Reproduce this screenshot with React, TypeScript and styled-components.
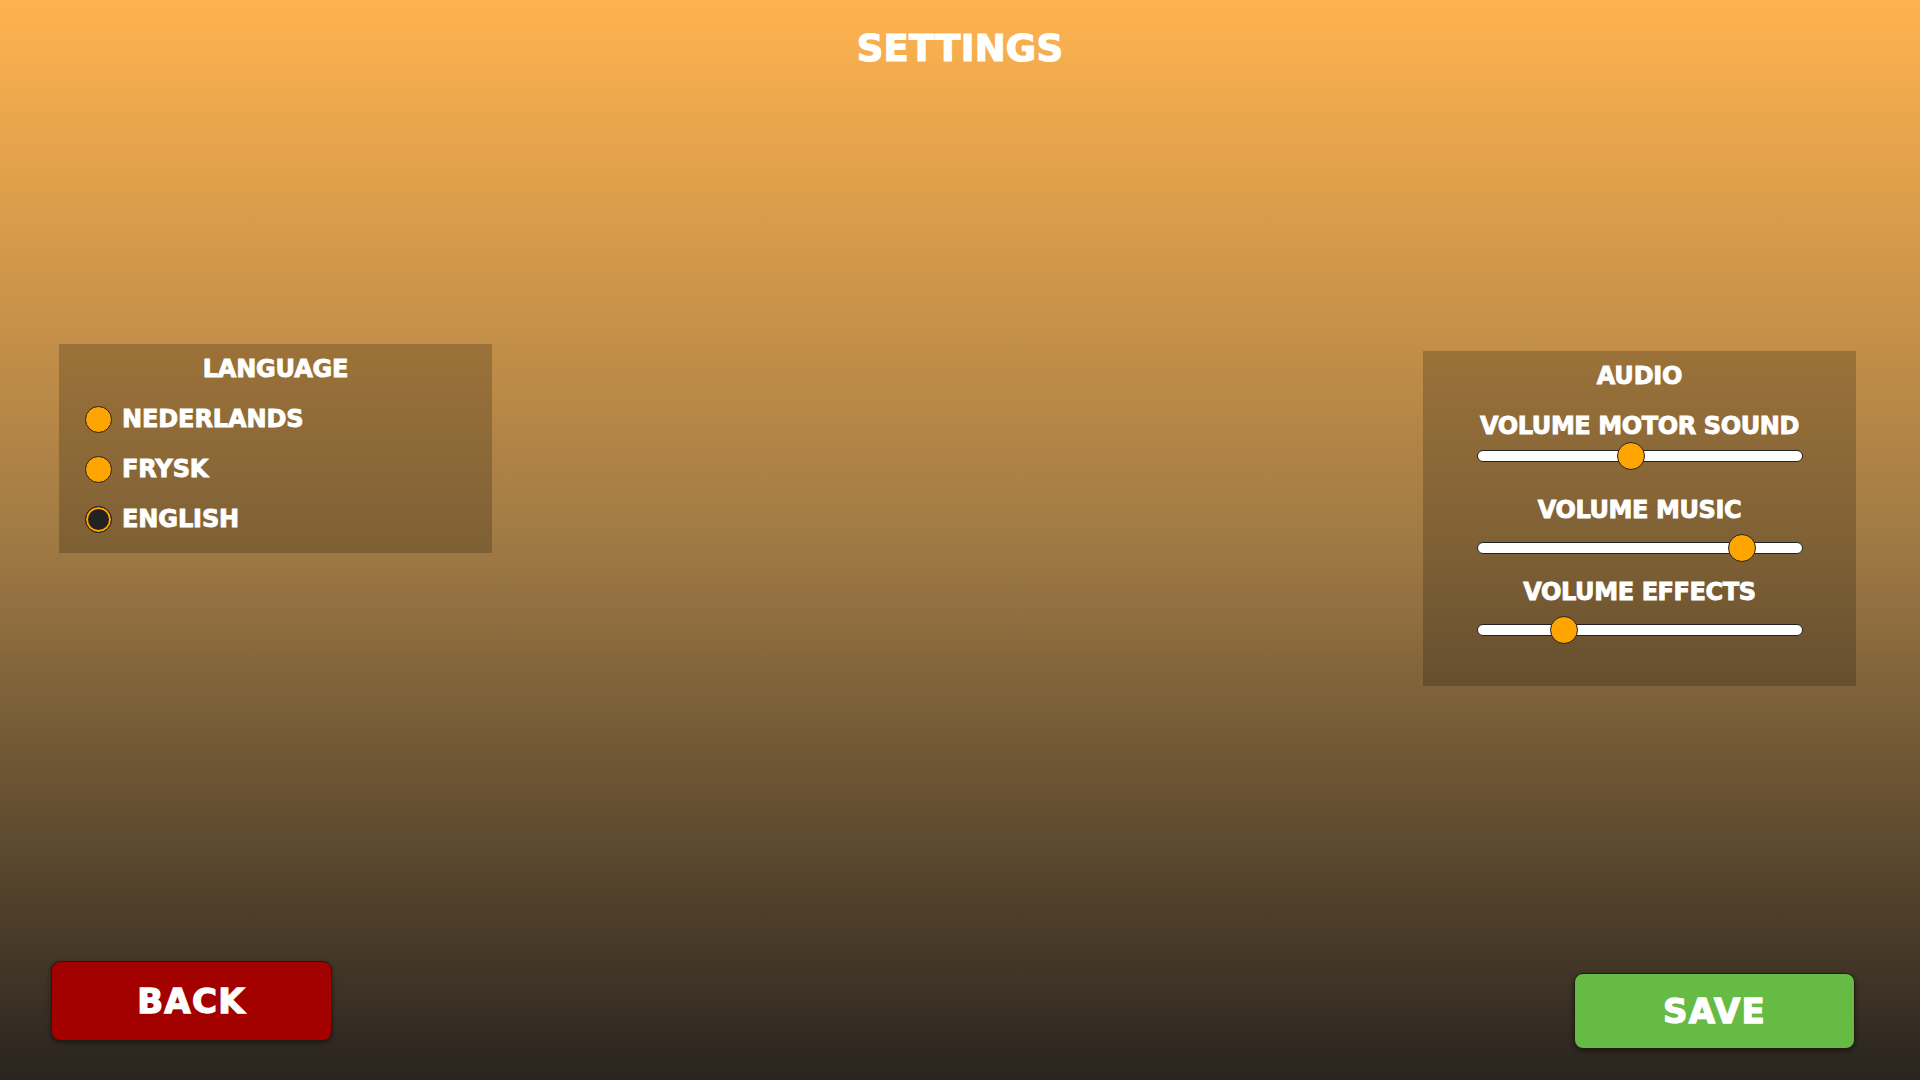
import React from "react";
import styled, { createGlobalStyle } from "styled-components";

const GlobalStyle = createGlobalStyle`
  html, body {
    margin: 0;
    padding: 0;
  }
  body {
    font-family: "DejaVu Sans", "Liberation Sans", sans-serif;
    font-weight: 700;
    color: #ffffff;
  }
  * { box-sizing: border-box; }
`;

const Page = styled.div`
  width: 1920px;
  height: 1080px;
  display: flex;
  flex-direction: column;
  background: linear-gradient(to bottom, #ffb34f 0%, #a07a44 50%, #29241f 100%);
  overflow: hidden;
  -webkit-text-stroke: 0.9px #ffffff;
`;

const Header = styled.header`
  height: 344px;
  padding-top: 27px;
  text-align: center;
`;

const Title = styled.h1`
  margin: 0;
  font-size: 37px;
  line-height: 44px;
  font-weight: 700;
  letter-spacing: 0.2px;
  -webkit-text-stroke: 1.2px #ffffff;
`;

const PanelRow = styled.div`
  display: flex;
  justify-content: space-between;
  align-items: flex-start;
  padding: 0 64px 0 59px;
`;

const Panel = styled.section<{ $offset?: number; $pad: string }>`
  width: 433px;
  margin-top: ${(p) => p.$offset ?? 0}px;
  padding: ${(p) => p.$pad};
  background: rgba(0, 0, 0, 0.2);
  display: flex;
  flex-direction: column;
`;

const PanelTitle = styled.h2`
  margin: 0;
  font-size: 24px;
  line-height: 28px;
  font-weight: 700;
  text-align: center;
  letter-spacing: -0.2px;
`;

const OptionList = styled.div`
  margin-top: 11px;
  display: flex;
  flex-direction: column;
`;

const OptionRow = styled.label`
  height: 50px;
  display: flex;
  align-items: center;
  gap: 10px;
  font-size: 24px;
  letter-spacing: -0.1px;
  cursor: pointer;
`;

const RadioDot = styled.span<{ $checked: boolean }>`
  width: 27px;
  height: 27px;
  border-radius: 50%;
  border: 1px solid #222222;
  background: ${(p) => (p.$checked ? "#222222" : "#ffa500")};
  box-shadow: ${(p) => (p.$checked ? "inset 0 0 0 2px #ffa500" : "none")};
  flex-shrink: 0;
`;

const SliderGroup = styled.div<{ $top: number; $gap: number }>`
  margin-top: ${(p) => p.$top}px;
  display: flex;
  flex-direction: column;
  align-items: center;
  gap: ${(p) => p.$gap}px;
`;

const SliderLabel = styled.div`
  font-size: 24px;
  line-height: 28px;
  text-align: center;
  letter-spacing: -0.4px;
`;

const SliderBox = styled.div`
  height: 28px;
  width: 326px;
  display: flex;
  align-items: center;
`;

const Track = styled.div`
  position: relative;
  width: 100%;
  height: 12px;
  border-radius: 6px;
  background: #ffffff;
  border: 1px solid #222222;
`;

const Thumb = styled.div`
  position: absolute;
  top: 50%;
  width: 28px;
  height: 28px;
  margin-top: -14px;
  border-radius: 50%;
  background: #ffa500;
  border: 1px solid #222222;
`;

const Footer = styled.footer`
  margin-top: auto;
  display: flex;
  justify-content: space-between;
  align-items: flex-end;
  padding: 0 65px 31px 51px;
`;

const Button = styled.button<{ $variant: "back" | "save" }>`
  width: 281px;
  height: ${(p) => (p.$variant === "back" ? 80 : 76)}px;
  margin-bottom: ${(p) => (p.$variant === "back" ? 8 : 0)}px;
  border-radius: 9px;
  border: 1px solid #231a14;
  background: ${(p) => (p.$variant === "back" ? "#a30000" : "#65bb43")};
  box-shadow: 0 2px 5px rgba(0, 0, 0, 0.45);
  color: #ffffff;
  font-family: "DejaVu Sans", "Liberation Sans", sans-serif;
  font-weight: 700;
  font-size: 34px;
  letter-spacing: 1.3px;
  -webkit-text-stroke: 1.3px #ffffff;
  cursor: pointer;
  padding: 0;
`;

const languages = [
  { name: "NEDERLANDS", checked: false },
  { name: "FRYSK", checked: false },
  { name: "ENGLISH", checked: true },
];

const sliders = [
  { label: "VOLUME MOTOR SOUND", value: 47, top: 22, gap: 2 },
  { label: "VOLUME MUSIC", value: 84.5, top: 26, gap: 10 },
  { label: "VOLUME EFFECTS", value: 24.5, top: 16, gap: 10 },
];

const TRACK_W = 326;
const THUMB = 28;

export default function App() {
  return (
    <>
      <GlobalStyle />
      <Page>
        <Header>
          <Title>SETTINGS</Title>
        </Header>
        <PanelRow>
          <Panel $pad="11px 26px 9px">
            <PanelTitle>LANGUAGE</PanelTitle>
            <OptionList>
              {languages.map((l) => (
                <OptionRow key={l.name}>
                  <RadioDot $checked={l.checked} />
                  {l.name}
                </OptionRow>
              ))}
            </OptionList>
          </Panel>
          <Panel $offset={7} $pad="11px 0 42px">
            <PanelTitle>AUDIO</PanelTitle>
            {sliders.map((s) => (
              <SliderGroup key={s.label} $top={s.top} $gap={s.gap}>
                <SliderLabel>{s.label}</SliderLabel>
                <SliderBox>
                  <Track>
                    <Thumb
                      style={{
                        left: `${(s.value / 100) * (TRACK_W - THUMB) - 1}px`,
                      }}
                    />
                  </Track>
                </SliderBox>
              </SliderGroup>
            ))}
          </Panel>
        </PanelRow>
        <Footer>
          <Button $variant="back">BACK</Button>
          <Button $variant="save">SAVE</Button>
        </Footer>
      </Page>
    </>
  );
}
